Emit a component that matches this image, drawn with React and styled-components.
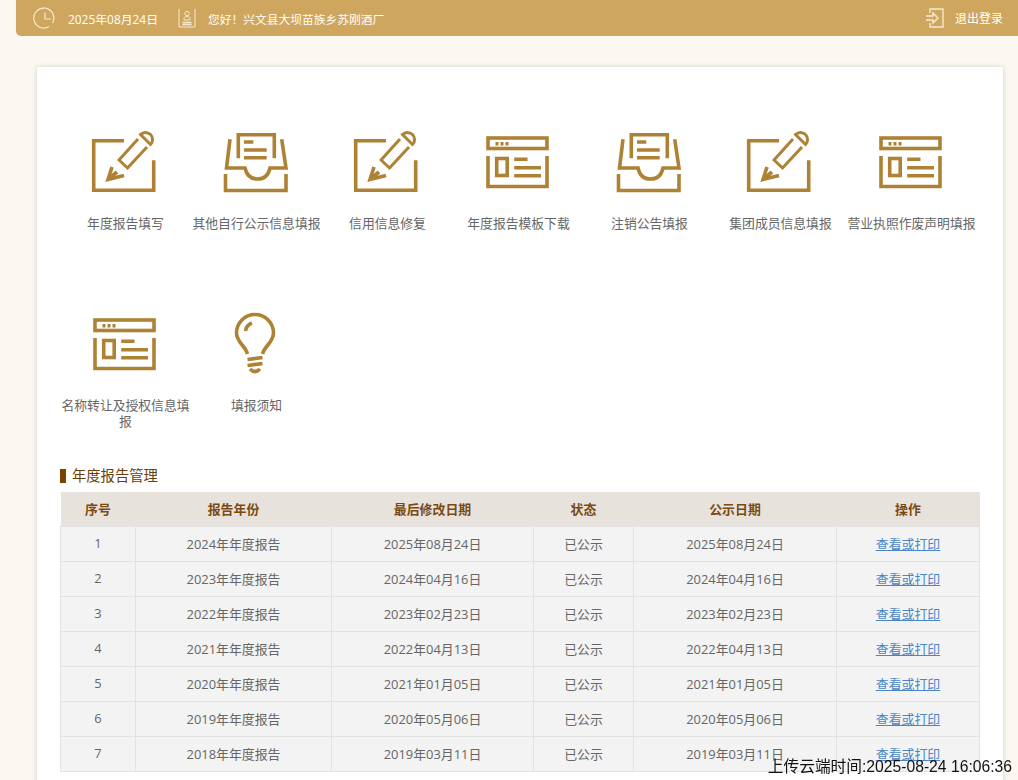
import React from "react";
import styled, { createGlobalStyle } from "styled-components";

const GlobalStyle = createGlobalStyle`
  html, body {
    margin: 0;
    padding: 0;
    overflow: hidden;
    background: #fbf8f1;
    font-family: "Open Sans", "Noto Sans CJK SC", sans-serif;
  }
`;

const TopBar = styled.div`
  display: flex;
  align-items: center;
  justify-content: space-between;
  height: 36px;
  margin-left: 16px;
  padding: 0 15px 0 16px;
  background: #cfa65e;
  border-bottom-left-radius: 5px;
  color: #fff;
  font-size: 12px;
`;

const BarGroup = styled.div`
  display: flex;
  align-items: center;
`;

const BarIcon = styled.svg`
  display: block;
  flex: none;
  width: ${(p) => p.$w}px;
  height: 24px;
  margin-right: ${(p) => p.$gap}px;
`;

const BarText = styled.span`
  margin-right: ${(p) => p.$gap || 0}px;
  font-size: ${(p) => p.$size || 12}px;
  white-space: nowrap;
`;

const Card = styled.div`
  margin: 31px 15px 0 37px;
  padding: 59px 23px 60px;
  background: #fff;
  box-shadow: 0 0 5px rgba(0, 0, 0, 0.16);
`;

const Shortcuts = styled.div`
  display: grid;
  grid-template-columns: repeat(7, 131px);
  row-gap: 77px;
  align-items: start;
`;

const Shortcut = styled.a`
  display: block;
  text-align: center;
  color: #666;
  font-size: 12.8px;
  line-height: 16px;
`;

const ShortcutIcon = styled.svg`
  display: block;
  width: 72px;
  height: 70px;
  margin: 0 auto 19px;
  fill: none;
  stroke: #ae8235;
  stroke-width: 3.6;
`;

const Heading = styled.h3`
  height: 14px;
  margin: 40px 0 9px;
  padding-left: 6px;
  border-left: 6px solid #7a4300;
  color: #6b3d0a;
  font-size: 14.3px;
  font-weight: 400;
  line-height: 14px;
`;

const Table = styled.table`
  width: 919px;
  table-layout: fixed;
  border-collapse: collapse;
  font-size: 12.9px;
  text-align: center;
`;

const Th = styled.th`
  box-sizing: border-box;
  width: ${(p) => p.$w}px;
  height: 34px;
  padding: 0 0 1px;
  background: #e8e2dc;
  color: #7a4a12;
  font-weight: 700;
`;

const Td = styled.td`
  box-sizing: border-box;
  height: 35px;
  padding: 0 0 1px;
  background: #f3f3f3;
  border: 1px solid #e2e2e2;
  color: #666;
`;

const Link = styled.a`
  color: #4a86c5;
  text-decoration: underline;
`;

const UploadStamp = styled.div`
  position: fixed;
  right: 6px;
  bottom: 3px;
  color: #111;
  font-family: "Liberation Sans", "Noto Sans CJK SC", sans-serif;
  font-size: 15.7px;
  line-height: 20px;
  white-space: nowrap;
`;

const PencilIcon = () => (
  <ShortcutIcon viewBox="2 0 72 70">
    <path d="M36 14.8H5.7V64.3H65.7V34.3" />
    <path d="M24 41L20 53.5L36 49.5" />
    <path d="M21 52.5L29 46" strokeWidth="4" />
    <path d="M31 34L50 13M39.5 42L59 21M30 33L40.5 43" strokeWidth="3" />
    <path d="M52.5 8.5A7 7 0 0 1 62.5 18.5Z" strokeWidth="3" />
  </ShortcutIcon>
);

const InboxIcon = () => (
  <ShortcutIcon viewBox="1 0 72 70">
    <path d="M18.3 32.3V8.7H54.3V32.3" />
    <path d="M24 16H33.3M24 24H46.7M24 31.7H46.7" />
    <path d="M10 13.3L6.5 42H25C26.5 49 31 53 37.5 53C44 53 48.5 49 50 42H66L61.7 13.3" />
    <path d="M5.5 48V64.5H66V48" />
  </ShortcutIcon>
);

const WindowIcon = () => (
  <ShortcutIcon viewBox="1 0 72 70">
    <rect x="6" y="12" width="59" height="10.5" />
    <path d="M13.5 17.8H16.5M18.5 17.8H21.5M23.5 17.8H26.5" />
    <path d="M6 30V60.5H65V30" />
    <rect x="14.7" y="32.5" width="10.5" height="17" />
    <path d="M32.2 33.3H45.5M32.2 41.7H59M32.2 49.7H59" />
  </ShortcutIcon>
);

const BulbIcon = () => (
  <ShortcutIcon viewBox="0.5 0 72 70">
    <path d="M27 46C25 38 16 34 16 25A18.5 18.5 0 0 1 53 25C53 34 44 38 42 46" />
    <path d="M25 23A10 10 0 0 1 31.5 15" />
    <path d="M27 51.5L42 49.5M27 57.5L42 55.5" />
    <path d="M29.5 61Q34.5 66 39.5 61" />
  </ShortcutIcon>
);

const shortcuts = [
  { label: "年度报告填写", Icon: PencilIcon },
  { label: "其他自行公示信息填报", Icon: InboxIcon },
  { label: "信用信息修复", Icon: PencilIcon },
  { label: "年度报告模板下载", Icon: WindowIcon },
  { label: "注销公告填报", Icon: InboxIcon },
  { label: "集团成员信息填报", Icon: PencilIcon },
  { label: "营业执照作废声明填报", Icon: WindowIcon },
  { label: "名称转让及授权信息填报", Icon: WindowIcon },
  { label: "填报须知", Icon: BulbIcon },
];

const columns = [
  { title: "序号", w: 75 },
  { title: "报告年份", w: 196 },
  { title: "最后修改日期", w: 202 },
  { title: "状态", w: 100 },
  { title: "公示日期", w: 203 },
  { title: "操作", w: 143 },
];

const reports = [
  ["2024年年度报告", "2025年08月24日"],
  ["2023年年度报告", "2024年04月16日"],
  ["2022年年度报告", "2023年02月23日"],
  ["2021年年度报告", "2022年04月13日"],
  ["2020年年度报告", "2021年01月05日"],
  ["2019年年度报告", "2020年05月06日"],
  ["2018年年度报告", "2019年03月11日"],
];

export default function App() {
  return (
    <>
      <GlobalStyle />
      <TopBar>
        <BarGroup>
          <BarIcon $w={24} $gap={12} viewBox="0 0 24 24" fill="none" stroke="#f6e9cf" strokeWidth="1.2">
            <path d="M20.5 17A10 10 0 1 0 17 20.6" />
            <path d="M13 6.5V13H19" />
          </BarIcon>
          <BarText $size={11.9} $gap={20}>2025年08月24日</BarText>
          <BarIcon $w={18} $gap={12} viewBox="0 0 18 24" fill="none" stroke="#f6e9cf" strokeWidth="1">
            <path d="M1 3V21H17V3" />
            <circle cx="9" cy="7.5" r="2.2" />
            <path d="M6 14V12.5C6 11 7 10.5 9 10.5C11 10.5 12 11 12 12.5V14Z" />
            <path d="M4.5 16.5H13.5M4.5 18.5H13.5" strokeWidth="1.4" />
          </BarIcon>
          <BarText $size={11.75}>您好！兴文县大坝苗族乡苏刚酒厂</BarText>
        </BarGroup>
        <BarGroup>
          <BarIcon $w={18} $gap={11} viewBox="0 0 18 24" fill="none" stroke="#f6e9cf" strokeWidth="1.4">
            <path d="M4 7V3H17V21H4V17" />
            <path d="M0 10H7V7L12 12L7 17V14H0" />
          </BarIcon>
          <BarText>退出登录</BarText>
        </BarGroup>
      </TopBar>
      <Card>
        <Shortcuts>
          {shortcuts.map(({ label, Icon }) => (
            <Shortcut key={label}>
              <Icon />
              {label}
            </Shortcut>
          ))}
        </Shortcuts>
        <Heading>年度报告管理</Heading>
        <Table>
          <thead>
            <tr>
              {columns.map((c) => (
                <Th key={c.title} $w={c.w}>{c.title}</Th>
              ))}
            </tr>
          </thead>
          <tbody>
            {reports.map(([year, date], i) => (
              <tr key={year}>
                <Td>{i + 1}</Td>
                <Td>{year}</Td>
                <Td>{date}</Td>
                <Td>已公示</Td>
                <Td>{date}</Td>
                <Td><Link href="#">查看或打印</Link></Td>
              </tr>
            ))}
          </tbody>
        </Table>
      </Card>
      <UploadStamp>上传云端时间:2025-08-24 16:06:36</UploadStamp>
    </>
  );
}
